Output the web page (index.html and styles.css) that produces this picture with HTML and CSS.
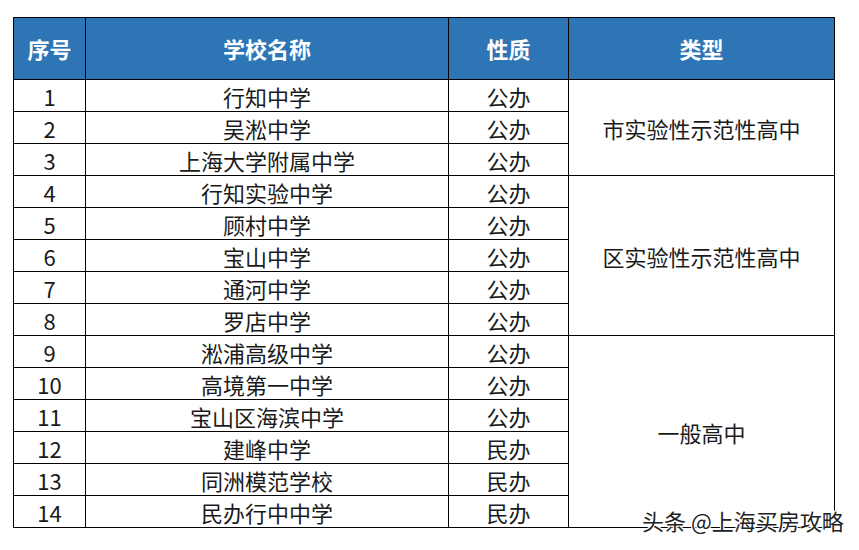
FILE: index.html
```html
<!DOCTYPE html>
<html lang="zh">
<head>
<meta charset="utf-8">
<link rel="stylesheet" href="styles.css">
</head>
<body>
<div class="page">
<table class="grid">
  <colgroup>
    <col class="c-no"><col class="c-name"><col class="c-kind"><col class="c-type">
  </colgroup>
  <thead>
    <tr><th>序号</th><th>学校名称</th><th>性质</th><th>类型</th></tr>
  </thead>
  <tbody>
    <tr><td>1</td><td>行知中学</td><td>公办</td><td rowspan="3">市实验性示范性高中</td></tr>
    <tr><td>2</td><td>吴淞中学</td><td>公办</td></tr>
    <tr><td>3</td><td>上海大学附属中学</td><td>公办</td></tr>
    <tr><td>4</td><td>行知实验中学</td><td>公办</td><td rowspan="5">区实验性示范性高中</td></tr>
    <tr><td>5</td><td>顾村中学</td><td>公办</td></tr>
    <tr><td>6</td><td>宝山中学</td><td>公办</td></tr>
    <tr><td>7</td><td>通河中学</td><td>公办</td></tr>
    <tr><td>8</td><td>罗店中学</td><td>公办</td></tr>
    <tr><td>9</td><td>淞浦高级中学</td><td>公办</td><td rowspan="6">一般高中</td></tr>
    <tr><td>10</td><td>高境第一中学</td><td>公办</td></tr>
    <tr><td>11</td><td>宝山区海滨中学</td><td>公办</td></tr>
    <tr><td>12</td><td>建峰中学</td><td>民办</td></tr>
    <tr><td>13</td><td>同洲模范学校</td><td>民办</td></tr>
    <tr><td>14</td><td>民办行中中学</td><td>民办</td></tr>
  </tbody>
</table>
<div class="watermark">头条 @上海买房攻略</div>
</div>
</body>
</html>
```
FILE: styles.css
```css
html, body {
  margin: 0;
  padding: 0;
  background: #ffffff;
}
body {
  width: 859px;
  height: 550px;
  overflow: hidden;
  font-family: "Noto Sans CJK SC", "Noto Sans", sans-serif;
  color: #1a1a1a;
}
.page {
  position: relative;
  padding: 17px 0 0 13px;
  height: 533px;
}
.grid {
  border-collapse: collapse;
  table-layout: fixed;
  width: 821px;
}
.c-no { width: 72px; }
.c-name { width: 363px; }
.c-kind { width: 120px; }
.c-type { width: 266px; }
.grid th, .grid td {
  border: 1px solid #000;
  text-align: center;
  vertical-align: middle;
  padding: 0;
}
.grid th {
  background: #2e75b6;
  color: #ffffff;
  font-weight: 700;
  font-size: 22px;
  line-height: 61px;
}
.grid td {
  font-size: 22px;
  line-height: 30px;
  padding-top: 1px;
  font-weight: 400;
}
.watermark {
  position: absolute;
  left: 642px;
  top: 505px;
  font-size: 22px;
  line-height: 30px;
  color: #222;
  white-space: nowrap;
  text-shadow: 1px 1px 0 #fff, -1px -1px 0 #fff, 1px -1px 0 #fff, -1px 1px 0 #fff;
}
```
